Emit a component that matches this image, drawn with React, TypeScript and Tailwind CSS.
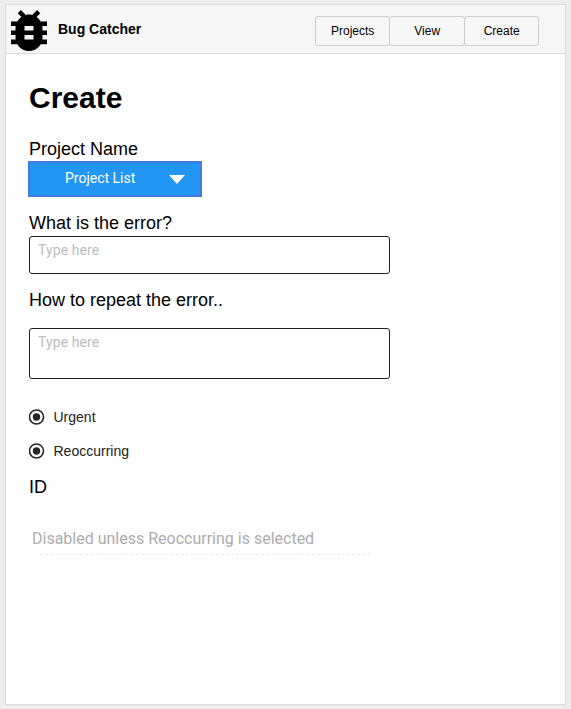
import React from "react";

function BugIcon() {
  return (
    <svg className="h-[41px] w-9 shrink-0" viewBox="4 3 16 18" preserveAspectRatio="none" fill="#000">
      <path d="M20 8h-2.81c-.45-.78-1.07-1.45-1.82-1.96L17 4.41 15.59 3l-2.17 2.17C12.96 5.06 12.49 5 12 5s-.96.06-1.41.17L8.41 3 7 4.41l1.62 1.63C7.88 6.55 7.26 7.22 6.81 8H4v2h2.09c-.05.33-.09.66-.09 1v1H4v2h2v1c0 .34.04.67.09 1H4v2h2.81c1.04 1.79 2.97 3 5.19 3s4.15-1.21 5.19-3H20v-2h-2.09c.05-.33.09-.66.09-1v-1h2v-2h-2v-1c0-.34-.04-.67-.09-1H20V8zm-6 8h-4v-2h4v2zm0-4h-4v-2h4v2z" />
    </svg>
  );
}

function NavButton({ label }: { label: string }) {
  return (
    <button className="-mr-px h-[30px] w-[75.5px] rounded-[3px] border border-[#ccc] bg-[#f7f7f7] text-xs text-black">
      {label}
    </button>
  );
}

function Radio({ label }: { label: string }) {
  return (
    <label className="flex h-[34px] items-center text-sm text-[#212121]">
      <svg className="mr-[8.5px] size-4" viewBox="0 0 16 16">
        <circle cx="7.5" cy="8" r="7" fill="none" stroke="#262626" strokeWidth="1.6" />
        <circle cx="7.5" cy="8" r="3.7" fill="#262626" />
      </svg>
      {label}
    </label>
  );
}

export default function App() {
  return (
    <div className="h-[709px] w-[571px] bg-[#ededed] pt-1 pl-[5px] font-['Liberation_Sans',Arial,sans-serif] text-black">
      <div className="h-[701px] w-[561px] border border-[#dcdcdc] bg-[#fefefe]">
        <header className="flex h-[49px] items-center border-b border-[#d9d9d9] bg-[#f6f6f6] pl-[5px]">
          <div className="mt-[3px]">
            <BugIcon />
          </div>
          <span className="ml-[11px] text-sm font-bold">Bug Catcher</span>
          <nav className="mt-[3px] mr-[26.6px] ml-auto flex">
            <NavButton label="Projects" />
            <NavButton label="View" />
            <NavButton label="Create" />
          </nav>
        </header>
        <main className="flex flex-col items-start pl-[23px]">
          <h1 className="mt-[26px] text-[30px] leading-9 font-bold">Create</h1>
          <h2 className="mt-[21px] text-lg leading-6">Project Name</h2>
          <button className="-ml-px flex h-9 w-[174px] items-center border-2 border-[#4878df] bg-[#2196f3] pb-[3px] pl-[35px] font-[Roboto,sans-serif] text-sm text-white">
            Project List
            <svg className="mt-[3px] ml-[34px] h-[9px] w-4" viewBox="0 0 16 9">
              <path d="M0 0h16L8 9z" fill="white" />
            </svg>
          </button>
          <h2 className="mt-[14px] text-lg leading-6">What is the error?</h2>
          <textarea
            placeholder="Type here"
            className="mt-px block h-[38px] w-[361px] resize-none overflow-hidden rounded-[3px] border border-[#212121] px-2 pt-[3px] font-[Roboto,sans-serif] text-sm leading-5 tracking-[0.1px] placeholder:text-[#bdbdbd]"
          />
          <h2 className="mt-[14px] text-lg leading-6">How to repeat the error..</h2>
          <textarea
            placeholder="Type here"
            className="mt-4 block h-[51px] w-[361px] resize-none overflow-hidden rounded-[3px] border border-[#212121] px-2 pt-[3px] font-[Roboto,sans-serif] text-sm leading-5 tracking-[0.1px] placeholder:text-[#bdbdbd]"
          />
          <div className="mt-[21px]">
            <Radio label="Urgent" />
            <Radio label="Reoccurring" />
          </div>
          <h2 className="mt-[7px] text-lg leading-6">ID</h2>
          <p className="mt-[28px] ml-[3px] h-[27px] font-[Roboto,sans-serif] text-base text-[#adadad]">
            Disabled unless Reoccurring is selected
          </p>
          <div className="ml-[11px] h-px w-[330px] border-t border-dashed border-[#ededed]" />
        </main>
      </div>
    </div>
  );
}
